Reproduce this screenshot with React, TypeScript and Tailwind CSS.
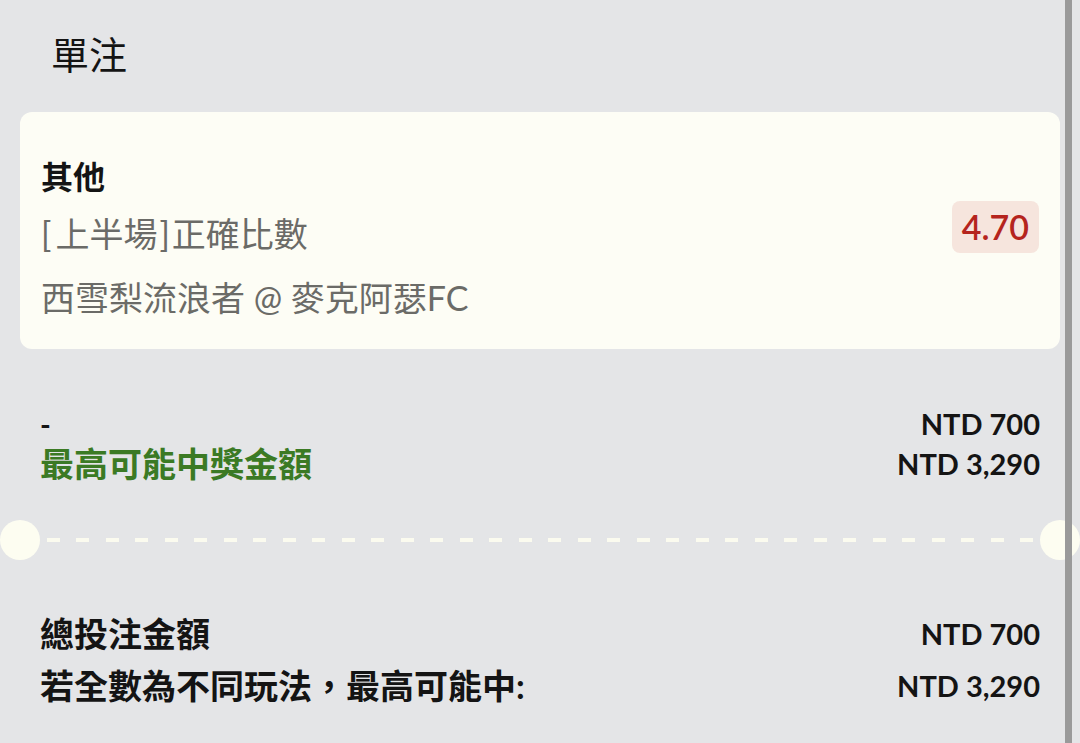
import React from "react";

const font = { fontFamily: "Lato, 'Noto Sans CJK TC', sans-serif" };

export default function App() {
  const dashes = Array.from({ length: 34 });
  return (
    <div
      className="relative w-[1080px] h-[743px] overflow-hidden bg-[#e4e5e7] text-[#141414]"
      style={font}
    >
      {/* header */}
      <div className="h-[112px] pl-[51px] pt-[26px] text-[38px] leading-[57px] font-normal">
        單注
      </div>

      {/* card */}
      <div className="mx-[20px] h-[237px] rounded-[12px] bg-[#fdfdf5] px-[21px] pt-[41px] flex flex-col">
        <div className="text-[32px] leading-[48px] font-bold">其他</div>
        <div className="flex justify-between items-start">
          <div className="mt-[8px] text-[34px] leading-[50px] text-[#6b6b67]">
            <span className="mr-[4px]">[</span>上半場<span className="mx-[2px]">]</span>正確比數
          </div>
          <div className="h-[52px] px-[10px] rounded-[8px] bg-[#f6e5dd] text-[#b5241d] text-[34px] leading-[52px] font-semibold">
            4.70
          </div>
        </div>
        <div className="mt-[14px] text-[34px] leading-[50px] text-[#6b6b67]">
          西雪梨流浪者 @ 麥克阿瑟FC
        </div>
      </div>

      {/* amount rows */}
      <div className="mt-[55px] px-[40px] flex flex-col">
        <div className="flex justify-between items-center h-[40px]">
          <span className="text-[29px] font-bold leading-[40px]">-</span>
          <span className="text-[29px] font-bold leading-[40px]">NTD 700</span>
        </div>
        <div className="flex justify-between items-center h-[40px]">
          <span className="text-[34px] font-bold leading-[40px] text-[#3b7a24]">
            最高可能中獎金額
          </span>
          <span className="text-[29px] font-bold leading-[40px]">NTD 3,290</span>
        </div>
      </div>

      {/* ticket divider */}
      <div className="mt-[36px] h-[40px] flex items-center">
        <div className="w-[40px] h-[40px] rounded-full bg-[#fdfdf1] shrink-0" />
        <div className="flex-1 flex justify-between items-center px-[7px]">
          {dashes.map((_, i) => (
            <div key={i} className="w-[13px] h-[4px] bg-[#fbfbef]" />
          ))}
        </div>
        <div className="w-[40px] h-[40px] rounded-full bg-[#fdfdf1] shrink-0" />
      </div>

      {/* totals */}
      <div className="mt-[48px] px-[40px] flex flex-col">
        <div className="flex justify-between items-center h-[52px]">
          <span className="text-[34px] font-bold leading-[52px]">總投注金額</span>
          <span className="text-[29px] font-bold leading-[52px]">NTD 700</span>
        </div>
        <div className="flex justify-between items-center h-[52px]">
          <span className="text-[34px] font-bold leading-[52px]">
            若全數為不同玩法，最高可能中:
          </span>
          <span className="text-[29px] font-bold leading-[52px]">NTD 3,290</span>
        </div>
      </div>

      {/* scrollbar-like edge */}
      <div className="absolute top-0 right-[8px] h-full w-[7px] bg-[#9a9a9a]" />
    </div>
  );
}
